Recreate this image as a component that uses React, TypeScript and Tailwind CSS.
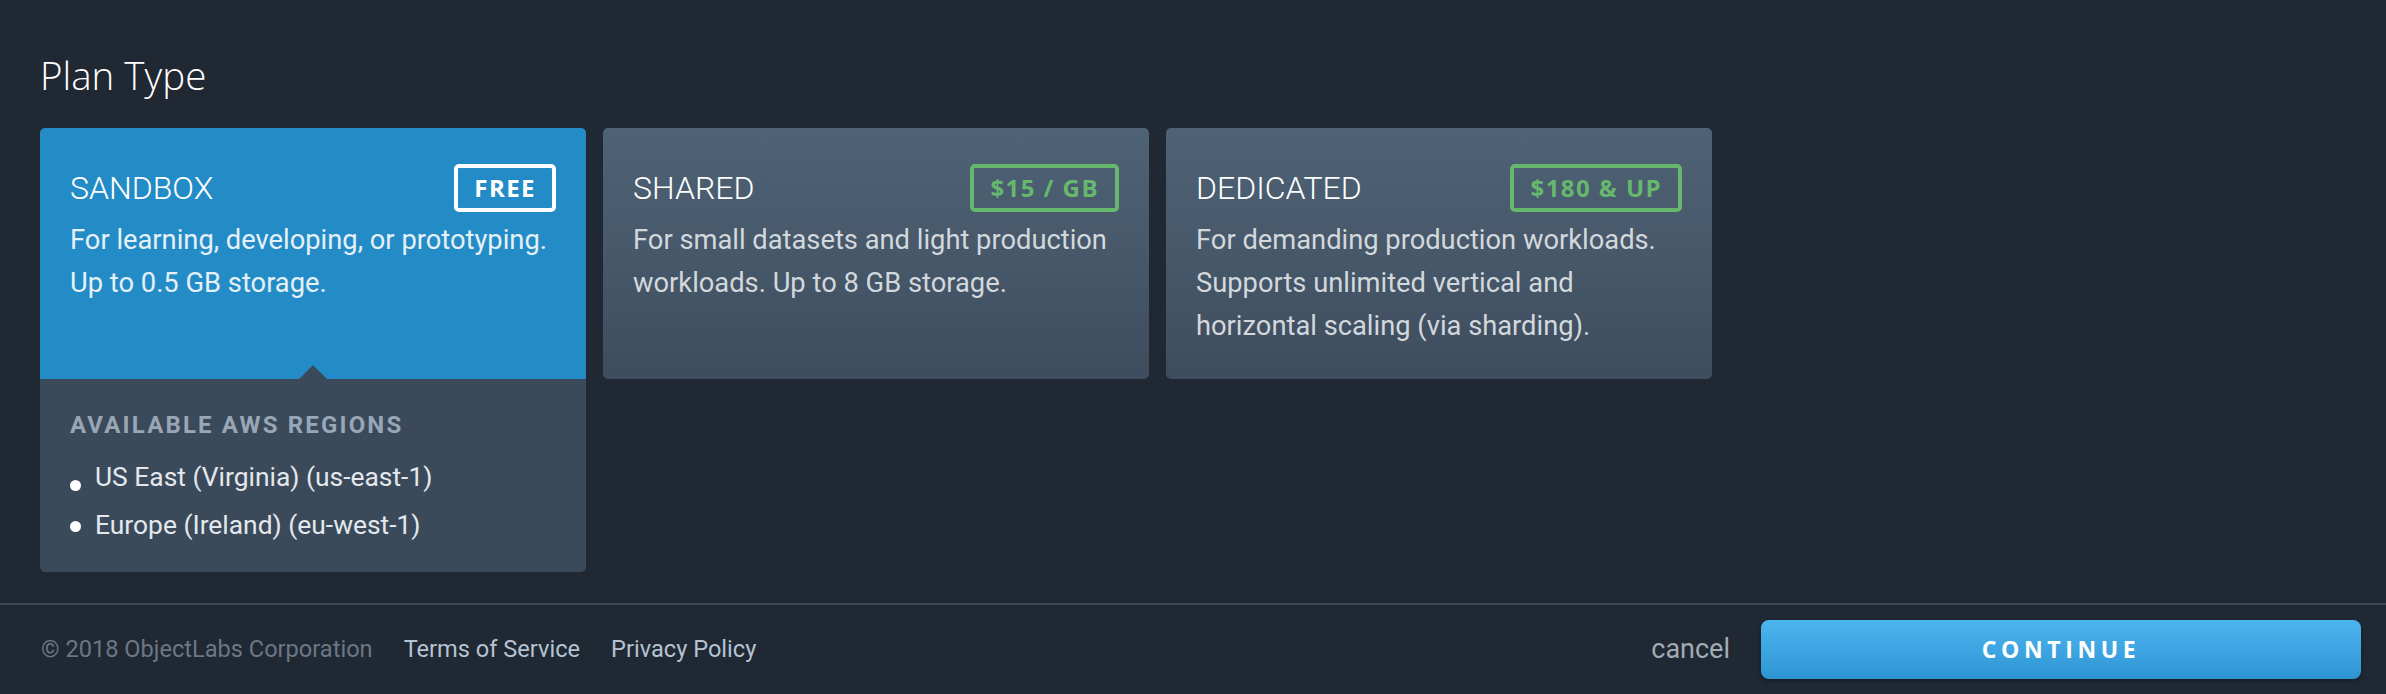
import React from 'react';

type Plan = {
  id: string;
  name: string;
  price: string;
  lines: string[];
  selected?: boolean;
};

const plans: Plan[] = [
  {
    id: 'sandbox',
    name: 'SANDBOX',
    price: 'FREE',
    lines: ['For learning, developing, or prototyping.', 'Up to 0.5 GB storage.'],
    selected: true,
  },
  {
    id: 'shared',
    name: 'SHARED',
    price: '$15 / GB',
    lines: ['For small datasets and light production', 'workloads. Up to 8 GB storage.'],
  },
  {
    id: 'dedicated',
    name: 'DEDICATED',
    price: '$180 & UP',
    lines: [
      'For demanding production workloads.',
      'Supports unlimited vertical and',
      'horizontal scaling (via sharding).',
    ],
  },
];

const regions = ['US East (Virginia) (us-east-1)', 'Europe (Ireland) (eu-west-1)'];

const PlanCard: React.FC<{ plan: Plan }> = ({ plan }) => {
  const top = plan.selected
    ? 'bg-[#238cc7]'
    : 'bg-gradient-to-b from-[#4f6376] to-[#3e4d5e]';

  return (
    <div className="w-[546px] rounded-[5px] overflow-hidden self-start">
      {/* header + description */}
      <div className={`h-[251px] px-[30px] pt-[36px] ${top}`}>
        <div className="flex items-center justify-between h-[48px]">
          <span className="text-[32px] font-light text-white leading-none">{plan.name}</span>
          <span
            className={`h-[48px] flex items-center rounded-[5px] border-[4px] px-[16px] text-[24px] font-bold tracking-[0.06em] font-['Open_Sans',sans-serif] ${
              plan.selected ? 'border-white text-white' : 'border-[#66b86d] text-[#66b86d]'
            }`}
          >
            {plan.price}
          </span>
        </div>
        <div
          className={`mt-[7px] text-[27.3px] leading-[43px] ${
            plan.selected ? 'text-[#e6f0f7]' : 'text-[#d3d8dd]'
          }`}
        >
          {plan.lines.map((l) => (
            <div key={l} className="whitespace-nowrap">{l}</div>
          ))}
        </div>
      </div>

      {/* regions panel for the selected plan */}
      {plan.selected && (
        <div className="relative bg-[#3a4a5b] px-[30px] pt-[32px] pb-[22px]">
          <div className="absolute -top-[14px] left-1/2 -translate-x-1/2 w-0 h-0 border-x-[14px] border-x-transparent border-b-[14px] border-b-[#3a4a5b]" />
          <div className="text-[24px] leading-[28px] font-bold tracking-[0.09em] text-[#98a6b5] whitespace-nowrap">
            AVAILABLE AWS REGIONS
          </div>
          <ul className="mt-[15px]">
            {regions.map((r, i) => (
              <li key={r} className="flex items-center h-[48px] text-[26.4px] text-[#e4e8ec]">
                <span
                  className={`w-[11px] h-[11px] rounded-full bg-white mr-[14px] shrink-0 ${
                    i === 0 ? 'translate-y-[7px]' : ''
                  }`}
                />
                {r}
              </li>
            ))}
          </ul>
        </div>
      )}
    </div>
  );
};

export default function App() {
  return (
    <div className="w-full h-[694px] bg-[#1f2833] flex flex-col font-['Roboto',sans-serif] overflow-hidden">
      <div className="px-[40px] pt-[54px]">
        <h1 className="text-[38.5px] leading-[43px] font-light text-white font-['Open_Sans',sans-serif]">Plan Type</h1>
        <div className="mt-[31px] flex gap-[17px]">
          {plans.map((p) => (
            <PlanCard key={p.id} plan={p} />
          ))}
        </div>
      </div>

      {/* Footer */}
      <div className="mt-[31px] border-t-2 border-[#3d4754] h-[91px] flex items-center pl-[41px] pr-[25px]">
        <div className="flex items-center gap-[31px] text-[23.6px]">
          <span className="text-[#6c7784]">© 2018 ObjectLabs Corporation</span>
          <span className="text-[#b5c3d2]">Terms of Service</span>
          <span className="text-[#b5c3d2]">Privacy Policy</span>
        </div>
        <div className="ml-auto flex items-center gap-[31px]">
          <span className="text-[27px] text-[#a3abb3]">cancel</span>
          <button className="w-[600px] h-[59px] rounded-[8px] bg-gradient-to-b from-[#4cb5f0] to-[#2d95d2] text-white text-[23px] font-bold tracking-[0.2em] font-['Open_Sans',sans-serif] shadow-[0_2px_4px_rgba(0,0,0,0.3)]">
            CONTINUE
          </button>
        </div>
      </div>
    </div>
  );
}
